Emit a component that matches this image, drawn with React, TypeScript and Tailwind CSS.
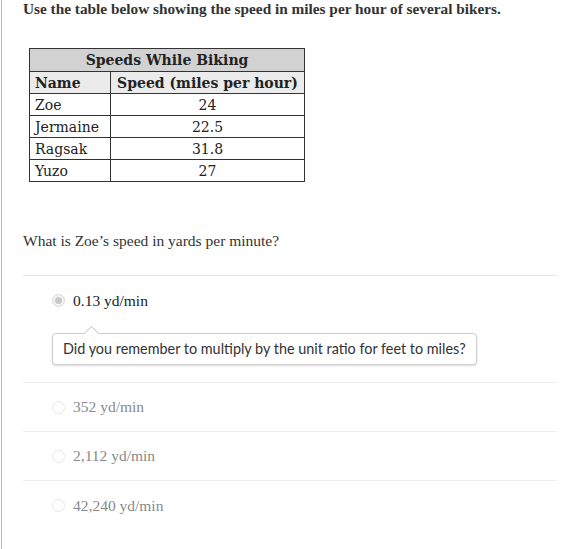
import React from 'react';

const rows = [
  { name: 'Zoe', speed: '24' },
  { name: 'Jermaine', speed: '22.5' },
  { name: 'Ragsak', speed: '31.8' },
  { name: 'Yuzo', speed: '27' },
];

const otherChoices = ['352 yd/min', '2,112 yd/min', '42,240 yd/min'];

const cell = "border border-[#333] font-['DejaVu_Serif',serif] text-[14px] leading-[20px] text-[#222]";

function Radio({ selected }: { selected?: boolean }) {
  return (
    <span
      className={`w-[13px] h-[13px] rounded-full border ${
        selected ? 'border-[#d6d6d6] bg-[#f4f4f4]' : 'border-[#e6e6e6] bg-white'
      } flex items-center justify-center shrink-0`}
    >
      {selected && <span className="w-[7px] h-[7px] rounded-full bg-[#c8c8c8]" />}
    </span>
  );
}

export default function App() {
  return (
    <div className="w-[577px] h-[549px] bg-white overflow-hidden">
      <div className="ml-[1px] h-full border-l border-[#b8b8b8] pl-[21px] pr-[20px]">
        <p className="font-['Liberation_Serif',serif] font-bold text-[15.3px] leading-[17px] text-[#333]">
          Use the table below showing the speed in miles per hour of several bikers.
        </p>

        {/* Table */}
        <table className="mt-[31px] ml-[6px] border-collapse w-[276px]">
          <thead>
            <tr className="bg-[#d2d2d2] h-[23px]">
              <th colSpan={2} className={`${cell} font-bold text-center leading-[21px]`}>
                Speeds While Biking
              </th>
            </tr>
            <tr className="bg-[#ebebeb] h-[22px]">
              <th className={`${cell} font-bold text-left px-[5px] w-[81px]`}>Name</th>
              <th className={`${cell} font-bold text-center`}>Speed (miles per hour)</th>
            </tr>
          </thead>
          <tbody>
            {rows.map(r => (
              <tr key={r.name} className="h-[22px]">
                <td className={`${cell} px-[5px] text-left`}>{r.name}</td>
                <td className={`${cell} text-center`}>{r.speed}</td>
              </tr>
            ))}
          </tbody>
        </table>

        <p className="mt-[50px] font-['Liberation_Serif',serif] text-[15.5px] leading-[17px] text-[#333]">
          What is Zoe’s speed in yards per minute?
        </p>

        <div className="mt-[26px] border-t border-[#e6e6e6]">
          {/* Selected choice with feedback */}
          <div className="pt-[16px] pb-[17px] pl-[29px] border-b border-[#ececec]">
            <div className="flex items-center gap-[8px] h-[17px]">
              <Radio selected />
              <span className="font-['Liberation_Serif',serif] text-[15.5px] text-[#222]">0.13 yd/min</span>
            </div>
            <div className="relative mt-[24px] w-[425px] border border-[#cfcfcf] rounded-[4px] bg-white shadow-[0_1px_2px_rgba(0,0,0,0.15)] px-[10px] py-[6px]">
              <span className="absolute -top-[6px] left-[33px] w-[11px] h-[11px] bg-white border-l border-t border-[#cfcfcf] rotate-45" />
              <p className="relative font-['Lato',sans-serif] text-[14.4px] leading-[18px] text-[#333] whitespace-nowrap">
                Did you remember to multiply by the unit ratio for feet to miles?
              </p>
            </div>
          </div>

          {otherChoices.map((c, i) => (
            <div
              key={c}
              className={`h-[49px] pl-[29px] flex items-center gap-[8px] ${
                i < otherChoices.length - 1 ? 'border-b border-[#ececec]' : ''
              }`}
            >
              <Radio />
              <span className="font-['Liberation_Serif',serif] text-[15.5px] text-[#8a8a8a]">{c}</span>
            </div>
          ))}
        </div>
      </div>
    </div>
  );
}
